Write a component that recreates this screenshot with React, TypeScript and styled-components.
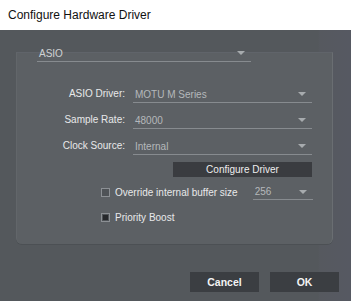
import React from "react";
import styled, { createGlobalStyle } from "styled-components";

const GlobalStyle = createGlobalStyle`
  html, body {
    margin: 0;
    padding: 0;
    background: #1d2b2e;
  }
  body {
    font-family: "Liberation Sans", Arial, sans-serif;
  }
`;

const Window = styled.div`
  width: 351px;
  height: 301px;
  display: flex;
  flex-direction: column;
  overflow: hidden;
  background: #54585c;
  box-shadow: inset -2px 0 0 #2a2c30, inset 0 -3px 0 #23393c;
`;

const TitleBar = styled.div`
  height: 30px;
  flex-shrink: 0;
  background: #ffffff;
  display: flex;
  align-items: center;
  padding-left: 8px;
  font-size: 12px;
  color: #111;
`;

const Body = styled.div`
  flex: 1;
  display: flex;
  flex-direction: column;
  padding: 22px 18px 0 16px;
  background: linear-gradient(to right, #54585c 0, #54585c 318px, #56595f 320px, #565962 349px);
`;

const Panel = styled.div`
  width: 317px;
  height: 192px;
  box-sizing: border-box;
  background: #5c6064;
  border-left: 1px solid #62666a;
  border-top: 1px solid #60646a;
  border-right: 1px solid #6a6e72;
  border-radius: 0 0 6px 6px;
  box-shadow: 0 1px 0 #4c5054;
  display: flex;
  flex-direction: column;
`;

const Legend = styled.div`
  margin: -8px 0 0 20px;
  width: 214px;
`;

const Form = styled.div`
  display: grid;
  grid-template-columns: 108px 179px;
  column-gap: 8px;
  row-gap: 9px;
  margin-top: 24px;
  align-items: end;
`;

const Label = styled.div`
  font-size: 10px;
  color: #e8e9ea;
  text-align: right;
  line-height: 16px;
  padding-bottom: 1px;
`;

const Select = styled.div<{ $light?: boolean }>`
  height: 16px;
  display: flex;
  align-items: center;
  justify-content: space-between;
  border-bottom: 1px solid #878b8f;
  padding: 0 6px 0 2px;
  font-size: 10px;
  color: ${({ $light }) => ($light ? "#cfd2d4" : "#b5b8bb")};
`;

const Arrow = styled.span`
  width: 0;
  height: 0;
  border-left: 4px solid transparent;
  border-right: 4px solid transparent;
  border-top: 4px solid #a7abae;
`;

const DriverButton = styled.button`
  grid-column: 2;
  margin: -2px 0 0 40px;
  height: 15px;
  padding: 0;
  border: none;
  background: #3a3c40;
  color: #eeeeee;
  font-family: "Liberation Sans", Arial, sans-serif;
  font-size: 10px;
`;

const Options = styled.div`
  display: flex;
  flex-direction: column;
  gap: 13px;
  margin: 9px 0 0 84px;
`;

const OptionRow = styled.label`
  display: flex;
  align-items: center;
  gap: 5px;
  font-size: 10px;
  color: #e8e9ea;
  height: 12px;
`;

const Box = styled.span<{ $checked?: boolean }>`
  width: 9px;
  height: 9px;
  box-sizing: border-box;
  border: 1px solid #8c9094;
  background: #4f5357;
  display: flex;
  align-items: center;
  justify-content: center;
  &::after {
    content: "";
    width: 5px;
    height: 5px;
    background: ${({ $checked }) => ($checked ? "#26282b" : "transparent")};
  }
`;

const BufferSelect = styled(Select)`
  width: 52px;
  margin-left: 10px;
  height: 14px;
`;

const Footer = styled.div`
  display: flex;
  justify-content: flex-end;
  gap: 11px;
  margin: 28px -6px 0 0;
`;

const DialogButton = styled.button`
  width: 69px;
  height: 20px;
  border: none;
  padding: 0;
  background: #3b3e42;
  color: #f4f4f4;
  font-family: "Liberation Sans", Arial, sans-serif;
  font-weight: 700;
  font-size: 10.5px;
`;

const Dropdown: React.FC<{ value: string; light?: boolean }> = ({ value, light }) => (
  <Select $light={light}>
    <span>{value}</span>
    <Arrow />
  </Select>
);

const App: React.FC = () => {
  return (
    <>
      <GlobalStyle />
      <Window>
        <TitleBar>Configure Hardware Driver</TitleBar>
        <Body>
          <Panel>
            <Legend>
              <Dropdown value="ASIO" light />
            </Legend>
            <Form>
              <Label>ASIO Driver:</Label>
              <Dropdown value="MOTU M Series" />
              <Label>Sample Rate:</Label>
              <Dropdown value="48000" />
              <Label>Clock Source:</Label>
              <Dropdown value="Internal" />
              <DriverButton>Configure Driver</DriverButton>
            </Form>
            <Options>
              <OptionRow>
                <Box />
                Override internal buffer size
                <BufferSelect>
                  <span>256</span>
                  <Arrow />
                </BufferSelect>
              </OptionRow>
              <OptionRow>
                <Box $checked />
                Priority Boost
              </OptionRow>
            </Options>
          </Panel>
          <Footer>
            <DialogButton>Cancel</DialogButton>
            <DialogButton>OK</DialogButton>
          </Footer>
        </Body>
      </Window>
    </>
  );
};

export default App;
